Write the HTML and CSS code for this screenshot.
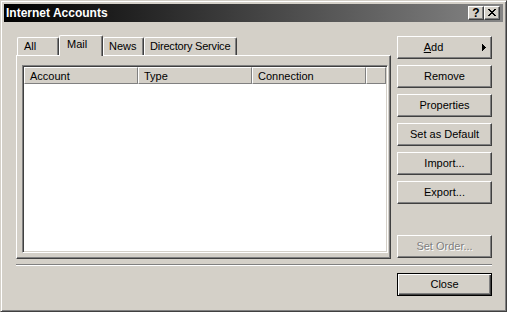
FILE: index.html
```html
<!DOCTYPE html>
<html>
<head>
<meta charset="utf-8">
<link rel="stylesheet" href="styles.css">
</head>
<body>
<div class="window">
  <div class="titlebar">
    <span class="title">Internet Accounts</span>
    <div class="caption-btns">
      <span class="cbtn help">?</span>
      <span class="cbtn close">
        <svg width="8" height="7" viewBox="0 0 8 7" shape-rendering="crispEdges">
          <rect x="0" y="0" width="2" height="1"/><rect x="6" y="0" width="2" height="1"/>
          <rect x="1" y="1" width="2" height="1"/><rect x="5" y="1" width="2" height="1"/>
          <rect x="2" y="2" width="4" height="1"/>
          <rect x="3" y="3" width="2" height="1"/>
          <rect x="2" y="4" width="4" height="1"/>
          <rect x="1" y="5" width="2" height="1"/><rect x="5" y="5" width="2" height="1"/>
          <rect x="0" y="6" width="2" height="1"/><rect x="6" y="6" width="2" height="1"/>
        </svg>
      </span>
    </div>
  </div>
  <div class="client">
    <div class="main">
      <div class="left">
        <div class="tabs">
          <div class="tab t-all">All</div>
          <div class="tab selected t-mail">Mail</div>
          <div class="tab t-news">News</div>
          <div class="tab t-dir">Directory Service</div>
        </div>
        <div class="panel">
          <div class="listview">
            <div class="header">
              <div class="col c-fixed">Account</div>
              <div class="col c-fixed">Type</div>
              <div class="col c-fixed">Connection</div>
              <div class="col c-fill"></div>
            </div>
          </div>
        </div>
      </div>
      <div class="buttons">
        <div class="btn btn-add"><span class="label"><u>A</u>dd</span>
          <svg class="arrow" width="4" height="7" viewBox="0 0 4 7" shape-rendering="crispEdges">
            <rect x="0" y="0" width="1" height="7"/><rect x="1" y="1" width="1" height="5"/>
            <rect x="2" y="2" width="1" height="3"/><rect x="3" y="3" width="1" height="1"/>
          </svg>
        </div>
        <div class="btn">Remove</div>
        <div class="btn">Properties</div>
        <div class="btn">Set as Default</div>
        <div class="btn">Import...</div>
        <div class="btn">Export...</div>
        <div class="btn disabled btn-last">Set Order...</div>
      </div>
    </div>
    <div class="separator"></div>
    <div class="footer">
      <div class="btn default">Close</div>
    </div>
  </div>
</div>
</body>
</html>
```

FILE: styles.css
```css
html, body {
  margin: 0;
  padding: 0;
  background: #d4d0c8;
}

.window {
  width: 507px;
  height: 312px;
  box-sizing: border-box;
  background: #d4d0c8;
  border: 1px solid;
  border-color: #d4d0c8 #404040 #404040 #d4d0c8;
  box-shadow: inset 1px 1px #ffffff, inset -1px -1px #808080;
  padding: 3px;
  font-family: "Liberation Sans", Arial, sans-serif;
  font-size: 11px;
  color: #000;
  display: flex;
  flex-direction: column;
}

.titlebar {
  height: 18px;
  flex: none;
  background: linear-gradient(to right, #000000, #858585);
  display: flex;
  align-items: center;
  padding-left: 2px;
}

.title {
  color: #fff;
  font-weight: bold;
  font-size: 12px;
  line-height: 18px;
}

.caption-btns {
  margin-left: auto;
  margin-right: 3px;
  display: flex;
}

.cbtn {
  width: 16px;
  height: 14px;
  box-sizing: border-box;
  background: #d4d0c8;
  border: 1px solid;
  border-color: #fff #404040 #404040 #fff;
  box-shadow: inset -1px -1px #808080;
  display: flex;
  align-items: center;
  justify-content: center;
}

.help {
  font-weight: bold;
  font-size: 12px;
  line-height: 12px;
  padding-bottom: 1px;
}

.close svg {
  fill: #000;
  margin-bottom: 1px;
}

.client {
  flex: 1;
  padding: 13px 11px 0 12px;
  display: flex;
  flex-direction: column;
}

.main {
  display: flex;
  gap: 6px;
  height: 224px;
}

.left {
  width: 375px;
  display: flex;
  flex-direction: column;
}

.tabs {
  height: 20px;
  display: flex;
  align-items: flex-end;
  padding-left: 1px;
}

.tab {
  box-sizing: border-box;
  height: 18px;
  line-height: 17px;
  border-top: 1px solid #fff;
  border-left: 1px solid #fff;
  border-right: 1px solid #404040;
  box-shadow: inset -1px 0 #808080;
  border-radius: 2px 2px 0 0;
  white-space: nowrap;
  background: #d4d0c8;
}

.t-all { width: 42px; padding-left: 6px; }
.t-mail { width: 44px; padding-left: 7px; }
.t-news { width: 41px; padding-left: 5px; }
.t-dir { width: 93px; padding-left: 5px; letter-spacing: -0.2px; }

.tab.selected {
  height: 21px;
  margin-bottom: -1px;
  line-height: 17px;
  position: relative;
  z-index: 1;
}

.panel {
  height: 204px;
  box-sizing: border-box;
  border: 1px solid;
  border-color: #fff #404040 #404040 #fff;
  box-shadow: inset -1px -1px #808080;
  padding: 9px 0 0 5px;
}

.listview {
  width: 366px;
  height: 188px;
  box-sizing: border-box;
  background: #fff;
  border: 1px solid;
  border-color: #808080 #fff #fff #808080;
  box-shadow: inset 1px 1px #404040, inset -1px -1px #d4d0c8;
  padding: 1px;
}

.header {
  display: flex;
  height: 17px;
}

.col {
  box-sizing: border-box;
  height: 17px;
  background: #d4d0c8;
  border-top: 1px solid #fff;
  border-left: 1px solid #fff;
  border-right: 1px solid #808080;
  border-bottom: 1px solid #808080;
  padding-left: 5px;
  line-height: 16px;
  white-space: nowrap;
}

.c-fixed { width: 114px; }
.c-fill { flex: 1; }

.buttons {
  width: 95px;
  display: flex;
  flex-direction: column;
  gap: 6px;
  padding-top: 1px;
}

.btn {
  width: 95px;
  height: 23px;
  box-sizing: border-box;
  background: #d4d0c8;
  border: 1px solid;
  border-color: #fff #404040 #404040 #fff;
  box-shadow: inset -1px -1px #808080;
  display: flex;
  align-items: center;
  justify-content: center;
  line-height: 13px;
  white-space: nowrap;
}

.btn-add {
  position: relative;
  padding-right: 22px;
}

.btn-add .arrow {
  position: absolute;
  right: 5px;
  top: 7px;
  fill: #000;
}

.btn-last {
  margin-top: auto;
  margin-bottom: 1px;
}

.disabled {
  color: #808080;
  text-shadow: 1px 1px #fff;
}

.separator {
  margin-top: 5px;
  height: 0;
  border-top: 1px solid #808080;
  border-bottom: 1px solid #fff;
}

.footer {
  margin-top: 7px;
  display: flex;
  justify-content: flex-end;
}

.btn.default {
  border: 1px solid #000;
  box-shadow: inset 1px 1px #fff, inset -1px -1px #404040, inset -2px -2px #808080;
}
```
